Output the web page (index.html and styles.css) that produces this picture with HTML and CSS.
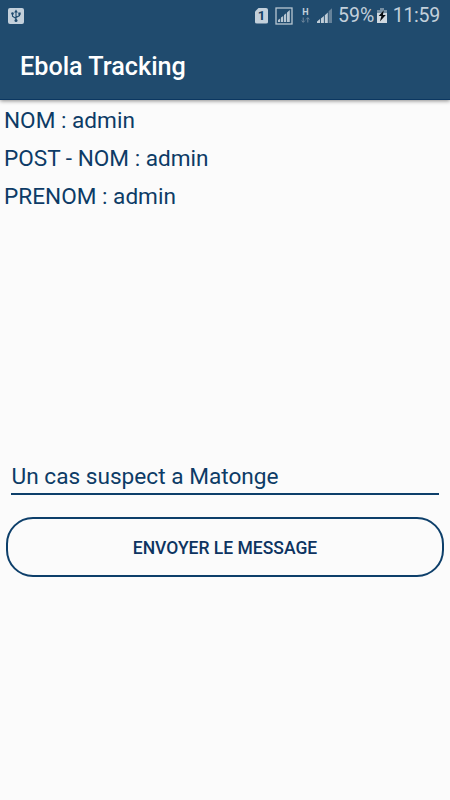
FILE: index.html
```html
<!DOCTYPE html>
<html lang="fr">
<head>
<meta charset="utf-8">
<title>Ebola Tracking</title>
<link rel="stylesheet" href="styles.css">
</head>
<body>
<header class="header">
  <div class="status">
    <svg class="usb" width="16" height="16" viewBox="0 0 16 16">
      <rect width="16" height="16" rx="2" fill="#c3d0db"/>
      <g fill="none" stroke="#204b6e" stroke-width="1.1"><path d="M8 3v9M4.5 6v2.2L8 10.5M11.5 6v1.6L8 9.5"/></g>
      <g fill="#204b6e"><path d="M8 1.5l1.9 3H6.1z"/><circle cx="8" cy="12.5" r="1.5"/><circle cx="4.5" cy="5.6" r="1.3"/><path d="M10.3 4.5h2.4v2.3h-2.4z"/></g>
    </svg>
    <span class="sim">1</span>
    <svg class="signal-box" width="18" height="18" viewBox="0 0 18 18">
      <rect x="1" y="1" width="16" height="16" fill="none" stroke="#b7c6d2" stroke-width="1.3"/>
      <g fill="#b7c6d2"><path d="M3 13l2.2-1.6V15H3zM6 10.6L8.2 9v6H6zM9 8l2.2-1.8V15H9zM12 5.6L14.8 3v12H12z"/></g>
    </svg>
    <span class="network">
      <span class="network-type">H</span>
      <svg class="arrows" width="9" height="6" viewBox="0 0 9 6"><g fill="none" stroke="#71899e"><path d="M2.2.5v4.8M.5 3.6l1.7 1.7 1.7-1.7M6.8 5.5V.7M5.1 2.4L6.8.7l1.7 1.7"/></g></svg>
    </span>
    <svg class="signal" width="15" height="16" viewBox="0 0 15 16">
      <path fill="#c0cdd8" d="M0 13.4l3-2.3V15H0zM3.9 10.4l3-2.4v7h-3zM7.8 7.2l3-2.8V15h-3z"/>
      <path fill="#66829a" d="M11.6 3.3L15 .2V15h-3.4z"/>
    </svg>
    <span class="percent">59%</span>
    <svg class="battery" width="10" height="15" viewBox="0 0 10 15">
      <path fill="#7790a4" d="M3 0h4v2h3v4H0V2h3z"/><path fill="#d0d9e1" d="M0 5h10v10H0z"/>
      <path fill="#060b10" d="M6.8 2.3L1.7 8h2.7l-1.5 5.4L8.8 7H5.9z"/>
    </svg>
    <span class="clock">11:59</span>
  </div>
  <h1 class="title">Ebola Tracking</h1>
</header>
<main class="content">
  <section class="person">
    <p>NOM : admin</p>
    <p>POST - NOM : admin</p>
    <p>PRENOM : admin</p>
  </section>
  <div class="message">Un cas suspect a Matonge</div>
  <button class="send">ENVOYER LE MESSAGE</button>
</main>
</body>
</html>
```

FILE: styles.css
```css
* { box-sizing: border-box; }

body {
  margin: 0;
  width: 450px;
  height: 800px;
  overflow: hidden;
  background: #fbfbfb;
  color: #0d3b66;
  font-family: Roboto, sans-serif;
}

.header {
  height: 100px;
  background: #204b6e;
  border-bottom: 1px solid #0b3761;
  box-shadow: 0 1px 4px rgba(0, 0, 0, .45);
}

.status {
  display: flex;
  align-items: center;
  height: 31px;
  padding: 0 10px 0 8px;
  color: #c3d0db;
  font-size: 19.5px;
  line-height: 31px;
}

.status svg { display: block; flex: none; }

.sim {
  width: 13px;
  height: 16px;
  margin-left: 231px;
  border-radius: 2px;
  background: #c3d0db;
  clip-path: polygon(4px 0, 100% 0, 100% 100%, 0 100%, 0 4px);
  color: #153f62;
  font-size: 13px;
  font-weight: 700;
  line-height: 16px;
  text-align: center;
}

.signal-box { margin-left: 7px; }

.network {
  display: flex;
  flex-direction: column;
  align-items: center;
  width: 9px;
  height: 15px;
  margin-left: 8px;
}

.network-type {
  font-size: 9px;
  font-weight: 700;
  line-height: 9px;
}

.signal { margin-left: 7px; }
.percent { margin-left: 6px; width: 36px; }
.battery { margin-left: 3px; }
.clock { margin-left: auto; letter-spacing: -.25px; }

.title {
  margin: 0;
  padding: 19px 20px 17px;
  color: #fff;
  font-size: 25.2px;
  font-weight: 500;
  line-height: 34px;
}

.content { display: flex; flex-direction: column; }

.person {
  height: 353px;
  padding: 2px 4px;
  font-size: 22.6px;
  line-height: 38px;
}

.person p { margin: 0; }

.message {
  height: 42px;
  margin: 0 11px;
  padding: 8px 0 0 .5px;
  border-bottom: 2px solid #0d3f6a;
  font-size: 22.65px;
  line-height: 32px;
}

.send {
  height: 60px;
  margin: 22px 6px 0;
  padding: 1px 0 0;
  border: 2px solid #0d3f6a;
  border-radius: 27px;
  background: transparent;
  color: #0d3461;
  font-family: inherit;
  font-size: 17.5px;
  font-weight: 500;
}
```
